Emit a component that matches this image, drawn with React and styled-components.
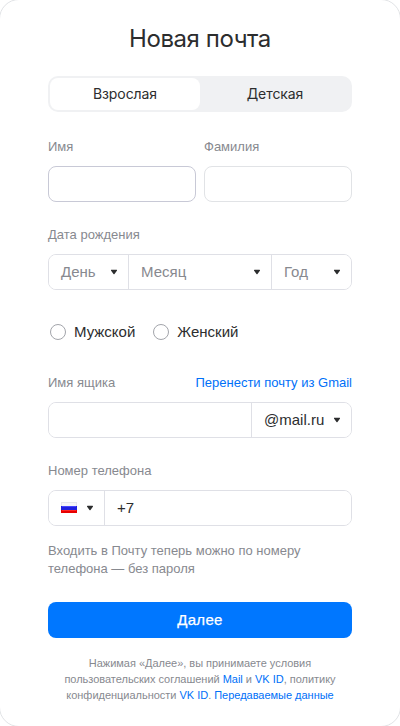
import React, { useState } from "react";
import styled, { createGlobalStyle } from "styled-components";

const GlobalStyle = createGlobalStyle`
  * { box-sizing: border-box; }
  body {
    margin: 0;
    overflow: hidden;
    background: #fff;
    color: #2c2d2e;
    font-family: "Liberation Sans", Arial, sans-serif;
  }
  button, input { font: inherit; color: inherit; }
`;

const Card = styled.main`
  width: 402px;
  height: 728px;
  margin: -1px;
  padding: 25px 48px 0;
  border: 1px solid #e1e3e6;
  border-radius: 20px;
  background: #fff;
`;

const Title = styled.h1`
  margin: 0;
  height: 28px;
  font: 400 24px/28px Inter, sans-serif;
  letter-spacing: -0.43px;
  text-align: center;
`;

const Tabs = styled.div`
  display: grid;
  grid-template-columns: 1fr 1fr;
  height: 36px;
  margin-top: 23px;
  padding: 2px;
  border-radius: 10px;
  background: #f0f1f3;
`;

const Tab = styled.button`
  padding: 0;
  border: 0;
  border-radius: 8px;
  background: ${(p) => (p.$active ? "#fff" : "transparent")};
  font: 400 14px/20px Inter, sans-serif;
  letter-spacing: -0.08px;
`;

const NameGrid = styled.div`
  display: grid;
  grid-template-columns: 1fr 1fr;
  gap: 8px;
  margin-top: 25px;
`;

const Section = styled.section`
  margin-top: ${(p) => p.$gap || 0}px;
`;

const LabelRow = styled.div`
  display: flex;
  justify-content: space-between;
  height: 20px;
  margin-bottom: 9px;
  color: #87898f;
  font-size: 13px;
  line-height: 20px;
  white-space: nowrap;
`;

const Link = styled.a`
  color: #0070f8;
  text-decoration: none;
`;

const TextInput = styled.input`
  display: block;
  width: 100%;
  height: 36px;
  padding: 0 12px;
  border: 1px solid ${(p) => (p.$hovered ? "#c8c9d6" : "#e1e3e6")};
  border-radius: 8px;
  outline: 0;
  background: #fff;
  font-size: 15px;
`;

const FieldGroup = styled.div`
  display: grid;
  grid-template-columns: ${(p) => p.$columns};
  height: 36px;
  border: 1px solid #dfe0e6;
  border-radius: 8px;
  overflow: hidden;
`;

const Cell = styled.button`
  display: flex;
  align-items: center;
  justify-content: space-between;
  min-width: 0;
  padding: 0 10px 0 12px;
  border: 0;
  background: #fff;
  color: ${(p) => (p.$muted ? "#87898f" : "#2c2d2e")};
  font-size: 15px;
  line-height: 20px;
  white-space: nowrap;

  & + &, input + & { border-left: 1px solid #dfe0e6; }
`;

const GroupInput = styled.input`
  min-width: 0;
  padding: 0 12px 2px;
  border: 0;
  border-left: ${(p) => (p.$divided ? "1px solid #dfe0e6" : "0")};
  outline: 0;
  background: #fff;
  font-size: 15px;
`;

const ArrowIcon = styled.svg`
  width: 8px;
  height: 6px;
  flex: none;
`;

const FlagIcon = styled.svg`
  width: 16px;
  height: 11px;
  margin-bottom: 1px;
`;

const RadioRow = styled.div`
  display: flex;
  gap: 18px;
  margin: 32px 0 0 2px;
`;

const Radio = styled.label`
  display: flex;
  align-items: center;
  gap: 8px;
  height: 20px;
  font-size: 15px;
  line-height: 20px;

  input {
    appearance: none;
    width: 16px;
    height: 16px;
    margin: 0;
    border: 1px solid #a3a5ab;
    border-radius: 50%;
  }
  input:checked { border: 5px solid #07f; }
`;

const Hint = styled.p`
  margin: 16px 0 0;
  color: #87898f;
  font-size: 13px;
  line-height: 18px;
`;

const Submit = styled.button`
  display: block;
  width: 100%;
  height: 36px;
  margin-top: 24px;
  padding: 0 0 2px;
  border: 0;
  border-radius: 8px;
  background: #07f;
  color: #fff;
  font-size: 15px;
  letter-spacing: 0.3px;
  -webkit-text-stroke: 0.25px #fff;
`;

const Legal = styled.p`
  margin: 17px 0 0;
  color: #87898f;
  font-size: 11px;
  line-height: 16px;
  letter-spacing: -0.02px;
  text-align: center;
  white-space: nowrap;
`;

const Arrow = () => (
  <ArrowIcon viewBox="0 0 8 6" aria-hidden="true">
    <path d="M1.5 .8h5c.5 0 .7.5.4.9L4.5 5a.65.65 0 0 1-1 0L1.1 1.7C.8 1.3 1 .8 1.5.8Z" fill="#2c2d2e" />
  </ArrowIcon>
);

const RussianFlag = () => (
  <FlagIcon viewBox="0 0 16 11" aria-hidden="true">
    <path fill="#e6e6ea" d="M0 0h16v4H0z" />
    <path fill="#f6f6f8" d="M1 1h14v3H1z" />
    <path fill="#2020df" d="M0 4h16v4H0z" />
    <path fill="#4545ff" d="M1 4h14v1H1z" />
    <path fill="#e80000" d="M0 8h16v3H0z" />
    <path fill="#ff2525" d="M1 8h14v1H1z" />
  </FlagIcon>
);

export default function App() {
  const [tab, setTab] = useState(0);
  return (
    <>
      <GlobalStyle />
      <Card>
        <Title>Новая почта</Title>
        <Tabs>
          {["Взрослая", "Детская"].map((name, i) => (
            <Tab key={name} $active={tab === i} onClick={() => setTab(i)}>{name}</Tab>
          ))}
        </Tabs>
        <NameGrid>
          <Section>
            <LabelRow>Имя</LabelRow>
            <TextInput $hovered aria-label="Имя" />
          </Section>
          <Section>
            <LabelRow>Фамилия</LabelRow>
            <TextInput aria-label="Фамилия" />
          </Section>
        </NameGrid>
        <Section $gap={23}>
          <LabelRow>Дата рождения</LabelRow>
          <FieldGroup $columns="79px 143px 1fr">
            <Cell $muted>День<Arrow /></Cell>
            <Cell $muted>Месяц<Arrow /></Cell>
            <Cell $muted>Год<Arrow /></Cell>
          </FieldGroup>
        </Section>
        <RadioRow>
          <Radio><input type="radio" name="gender" />Мужской</Radio>
          <Radio><input type="radio" name="gender" />Женский</Radio>
        </RadioRow>
        <Section $gap={31}>
          <LabelRow>
            <span>Имя ящика</span>
            <Link>Перенести почту из Gmail</Link>
          </LabelRow>
          <FieldGroup $columns="1fr 100px">
            <GroupInput aria-label="Имя ящика" />
            <Cell>@mail.ru<Arrow /></Cell>
          </FieldGroup>
        </Section>
        <Section $gap={23}>
          <LabelRow>Номер телефона</LabelRow>
          <FieldGroup $columns="55px 1fr">
            <Cell aria-label="Россия"><RussianFlag /><Arrow /></Cell>
            <GroupInput $divided defaultValue="+7" aria-label="Номер телефона" />
          </FieldGroup>
        </Section>
        <Hint>Входить в Почту теперь можно по номеру<br />телефона — без пароля</Hint>
        <Submit>Далее</Submit>
        <Legal>
          Нажимая «Далее», вы принимаете условия<br />
          пользовательских соглашений <Link>Mail</Link> и <Link>VK ID</Link>, политику<br />
          конфиденциальности <Link>VK ID</Link>. <Link>Передаваемые данные</Link>
        </Legal>
      </Card>
    </>
  );
}
